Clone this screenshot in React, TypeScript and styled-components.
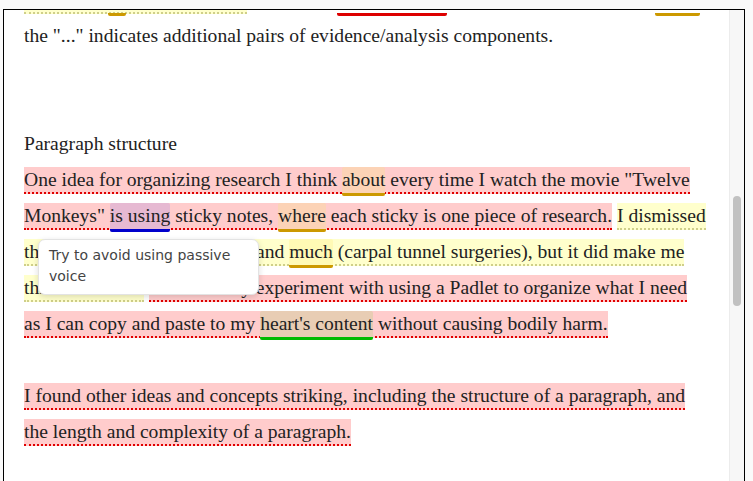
import React from 'react';
import styled, { createGlobalStyle } from 'styled-components';

const LINE = 36;

const GlobalStyle = createGlobalStyle`
  html, body {
    margin: 0;
    padding: 0;
    background: #fafafa;
  }
`;

const Page = styled.div`
  height: 100vh;
  box-sizing: border-box;
  padding: 9px 8px 0 3px;
  overflow: hidden;
`;

const Frame = styled.div`
  display: flex;
  height: 520px;
  border: 1px solid #000;
  background: #fff;
`;

const Viewport = styled.div`
  position: relative;
  flex: 1;
  overflow: hidden;
  padding: 0 23px 0 20px;
`;

const Doc = styled.div<{ $scroll: number }>`
  margin-top: ${p => -p.$scroll}px;
  font-family: "Liberation Serif", "Times New Roman", serif;
  font-size: 19.6px;
  line-height: ${LINE}px;
  color: #222;
`;

const Para = styled.p<{ $after?: number }>`
  margin: 0 0 ${p => (p.$after ?? 0) * LINE}px;
  white-space: normal;
`;

const OneLine = styled(Para)`
  white-space: nowrap;
`;

const tones = {
  red: { bg: '#ffcccc', line: '#e00000' },
  yellow: { bg: '#ffffcc', line: '#cfcf8a' },
};

const Sentence = styled.span<{ $tone: keyof typeof tones }>`
  padding: 2px 0;
  background: ${p => tones[p.$tone].bg};
  border-bottom: 2px dotted ${p => tones[p.$tone].line};
`;

const kinds = {
  gold: { bg: '#fcd3b6', line: '#cc9900' },
  goldOnYellow: { bg: '#fffab5', line: '#cc9900' },
  blue: { bg: '#e6b9d2', line: '#0000cc' },
  green: { bg: '#e8cdb4', line: '#00bb00' },
  bare: { bg: 'transparent', line: '#cc9900' },
  bareRed: { bg: 'transparent', line: '#dd0000' },
};

const Mark = styled.span<{ $kind: keyof typeof kinds }>`
  padding: 2px 0 3px;
  background: ${p => kinds[p.$kind].bg};
  border-bottom: 3px solid ${p => kinds[p.$kind].line};
  border-radius: 2px;
`;

const Track = styled.div`
  flex: none;
  width: 15px;
  box-sizing: border-box;
  padding: 0 3px;
  background: #f7f7f7;
  border-left: 1px solid #ececec;
`;

const Thumb = styled.div<{ $top: number; $height: number }>`
  margin-top: ${p => p.$top}px;
  height: ${p => p.$height}px;
  background: #c1c1c1;
  border-radius: 4px;
`;

const Tooltip = styled.div`
  position: absolute;
  left: 34px;
  top: 229px;
  width: 221px;
  box-sizing: border-box;
  padding: 5px 10px 7px;
  background: #fff;
  border: 1px solid #e3e3e3;
  border-radius: 7px;
  box-shadow: 0 2px 6px rgba(0, 0, 0, 0.14);
  font-family: "DejaVu Sans", Verdana, sans-serif;
  font-size: 14px;
  line-height: 21px;
  color: #444;
`;

export default function App() {
  return (
    <>
      <GlobalStyle />
      <Page>
        <Frame>
          <Viewport>
            <Doc $scroll={28}>
              <OneLine>
                <Sentence $tone="yellow">
                  This chart <Mark $kind="bare">its</Mark> a basic models
                </Sentence>{' '}
                and then a <Mark $kind="bareRed">claim/evidnce</Mark>, analysis, claim, and then{' '}
                <Mark $kind="bare">finaly</Mark>
              </OneLine>
              <Para $after={2}>the "..." indicates additional pairs of evidence/analysis components.</Para>
              <Para>Paragraph structure</Para>
              <Para $after={1}>
                <Sentence $tone="red">
                  One idea for organizing research I think <Mark $kind="gold">about</Mark> every time I watch
                  the movie "Twelve Monkeys" <Mark $kind="blue">is using</Mark> sticky notes,{' '}
                  <Mark $kind="gold">where</Mark> each sticky is one piece of research.
                </Sentence>{' '}
                <Sentence $tone="yellow">
                  I dismissed the idea as I'd write too long, and <Mark $kind="goldOnYellow">much</Mark> (carpal
                  tunnel surgeries), but it did make me think of Padlet.
                </Sentence>{' '}
                <Sentence $tone="red">
                  I think I may experiment with using a Padlet to organize what I need as I can copy and paste
                  to my <Mark $kind="green">heart's content</Mark> without causing bodily harm.
                </Sentence>
              </Para>
              <Para>
                <Sentence $tone="red">
                  I found other ideas and concepts striking, including the structure of a paragraph, and the
                  length and complexity of a paragraph.
                </Sentence>
              </Para>
            </Doc>
            <Tooltip>Try to avoid using passive voice</Tooltip>
          </Viewport>
          <Track>
            <Thumb $top={186} $height={110} />
          </Track>
        </Frame>
      </Page>
    </>
  );
}
